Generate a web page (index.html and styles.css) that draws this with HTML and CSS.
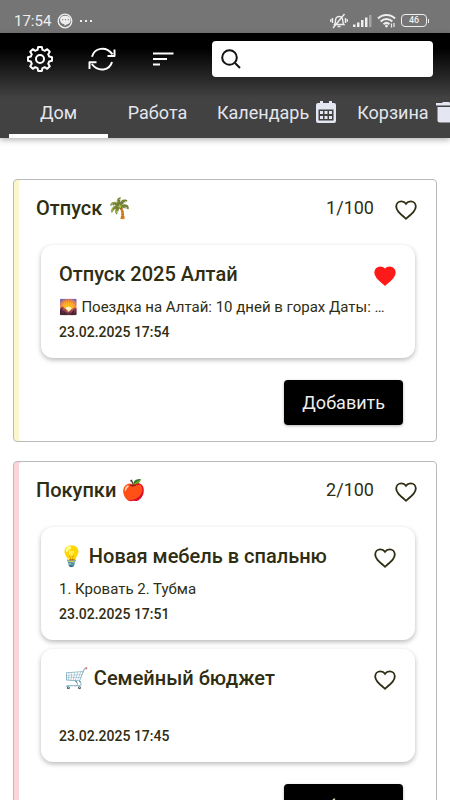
FILE: index.html
```html
<!DOCTYPE html>
<html lang="ru">
<head>
<meta charset="utf-8">
<meta name="viewport" content="width=device-width, initial-scale=1">
<title>Заметки</title>
<link rel="stylesheet" href="styles.css">
</head>
<body>
<svg class="defs" aria-hidden="true">
  <symbol id="heart" viewBox="0 0 24 24"><path d="M12 21.5 C5 15.500 1.300 12.500 1.300 8.300 C1.300 5 3.700 2.500 6.900 2.500 C9 2.500 10.900 3.500 12 5.200 C13.100 3.500 15 2.500 17.100 2.500 C20.300 2.500 22.700 5 22.700 8.300 C22.700 12.500 19 15.500 12 21.500 Z"/></symbol>
</svg>
<div class="status">
  <span class="time">17:54</span>
  <svg class="chat" viewBox="0 0 16 16"><circle cx="8" cy="8" r="6.800" fill="none" stroke="#eee" stroke-width="1.300"/><path d="M3 6.500C3 4 5 2.700 8 2.700s5.600 1.300 5.600 4.300-2 4-4 4.400L7.500 13v-1.700C4.500 11 3 9 3 6.500z" fill="#eee"/><path d="M5.200 6.600h1M8 6.600h1M10.700 6.600h1" stroke="#777" stroke-width="1.200"/></svg>
  <span class="dots"><i></i><i></i><i></i></span>
  <span class="system">
    <svg width="18" height="16" viewBox="0 0 18 16" fill="none" stroke="#eee" stroke-width="1.400"><path d="M4.500 11.500c1.500-2 .5-5 1.700-6.700C7.500 3 10.500 3 12 4.800c1.200 1.700.3 4.700 1.900 6.700zM7.500 13.500h3M2.500 5v5M.7 6.200v2.600M15.500 5v5M17.300 6.200v2.600M3 15 14.500 1"/></svg>
    <svg width="19" height="14" viewBox="0 0 19 14" fill="#eee"><path d="M0 10.500h2.500V13H0zM4 8.500h2.500V13H4zM8 6h2.500v7H8zM12 3.500h2.500V13H12z"/><path d="M16 1h2.500v12H16z" fill="#a5a5a5"/></svg>
    <svg width="19" height="16" viewBox="0 0 19 16" fill="none" stroke="#eee" stroke-width="2"><path d="M1 5.500C5.500.8 13.500.8 18 5.500M3.700 8.500c3.300-3.300 8.300-3.300 11.600 0M6.500 11.200c1.800-1.600 4.200-1.600 6 0"/><circle cx="9.500" cy="13" r="1" fill="#eee" stroke-width="1"/><path d="M14.500 10.500v4M17 10v4" stroke-width="1.200"/></svg>
    <span class="battery">46</span>
  </span>
</div>
<header class="header">
  <div class="toolbar">
    <button class="tool" aria-label="Настройки"><svg viewBox="0 0 28 28"><path d="M11.500 4.900 L12.200 2 H15.800 L16.500 4.900 A9.500 9.500 0 0 1 18.700 5.800 L21.200 4.200 L23.800 6.800 L22.200 9.300 A9.500 9.500 0 0 1 23.100 11.500 L26 12.200 V15.800 L23.100 16.500 A9.500 9.500 0 0 1 22.200 18.700 L23.800 21.200 L21.200 23.800 L18.700 22.200 A9.500 9.500 0 0 1 16.500 23.100 L15.800 26 H12.200 L11.500 23.100 A9.500 9.500 0 0 1 9.300 22.200 L6.800 23.800 L4.200 21.200 L5.800 18.700 A9.500 9.500 0 0 1 4.900 16.500 L2 15.800 V12.200 L4.900 11.500 A9.500 9.500 0 0 1 5.800 9.300 L4.200 6.800 L6.800 4.200 L9.300 5.800 A9.500 9.500 0 0 1 11.500 4.900 Z"/><circle cx="14" cy="14" r="4"/></svg></button>
    <button class="tool" aria-label="Обновить"><svg viewBox="0 0 28 28"><path d="M4 11.800C6.300 2.800 17.800.500 24.500 9.300M26.500 4.500V11H19.500M24 17C21.700 25.400 10.500 27.700 3.800 19M1.500 24V17.200H8.500"/></svg></button>
    <button class="tool" aria-label="Сортировка"><svg viewBox="0 0 28 28"><path d="M3 8.500H23.500M3 14H17M3 19.500H10"/></svg></button>
    <label class="search"><svg viewBox="0 0 22 22"><circle cx="9.500" cy="9.500" r="7.300"/><path d="m15 15 5 5"/></svg><input type="search" aria-label="Поиск"></label>
  </div>
  <nav class="tabs">
    <a class="tab active" href="#home">Дом</a>
    <a class="tab" href="#work">Работа</a>
    <a class="tab" href="#calendar">Календарь <svg viewBox="0 0 22 24"><path d="M3 3H5V1H8V3H14V1H17V3H19Q21 3 21 5V21Q21 23 19 23H3Q1 23 1 21V5Q1 3 3 3Z"/><path d="M3.500 9.500H18.500V20.500H3.500Z" fill="#424242"/><path d="M5 11h3v3H5zM9.500 11h3v3h-3zM14 11h3v3h-3zM5 16h3v3H5zM9.500 16h3v3h-3zM14 16h3v3h-3z"/></svg></a>
    <a class="tab" href="#trash">Корзина <svg viewBox="0 0 22 24"><path d="M1 3H7L8 2H14L15 3H21V5.500H1ZM2.500 7H19.500V20Q19.500 22.500 17 22.500H5Q2.500 22.500 2.500 20Z"/></svg></a>
  </nav>
</header>
<main class="boards">
  <section class="board yellow">
    <div class="board-head"><h2>Отпуск 🌴</h2><span class="count">1/100</span><button class="like" aria-label="В избранное"><svg><use href="#heart"/></svg></button></div>
    <div class="notes">
      <article class="note">
        <div class="note-head"><h3>Отпуск 2025 Алтай</h3><button class="like liked" aria-label="Убрать из избранного"><svg><use href="#heart"/></svg></button></div>
        <p>🌄 Поездка на Алтай: 10 дней в горах Даты: …</p>
        <time>23.02.2025 17:54</time>
      </article>
    </div>
    <button class="add">Добавить</button>
  </section>
  <section class="board pink">
    <div class="board-head"><h2>Покупки 🍎</h2><span class="count">2/100</span><button class="like" aria-label="В избранное"><svg><use href="#heart"/></svg></button></div>
    <div class="notes">
      <article class="note">
        <div class="note-head"><h3>💡 Новая мебель в спальню</h3><button class="like" aria-label="В избранное"><svg><use href="#heart"/></svg></button></div>
        <p>1. Кровать 2. Тубма</p>
        <time>23.02.2025 17:51</time>
      </article>
      <article class="note">
        <div class="note-head"><h3>&nbsp;🛒 Семейный бюджет</h3><button class="like" aria-label="В избранное"><svg><use href="#heart"/></svg></button></div>
        <p></p>
        <time>23.02.2025 17:45</time>
      </article>
    </div>
    <button class="add">Добавить</button>
  </section>
</main>
</body>
</html>
```
FILE: styles.css
```css
* { box-sizing: border-box; }
html { overflow: hidden auto; scrollbar-width: none; }
body { margin: 0; background: #fff; color: #2f2d12; font-family: Roboto, "Noto Color Emoji", sans-serif; }
button { padding: 0; border: 0; background: none; font: inherit; color: inherit; }
h2, h3, p { margin: 0; }
svg { display: block; flex: none; }
.defs { position: absolute; width: 0; height: 0; }

.status { display: flex; align-items: center; height: 33px; padding: 8px 23px 0 14px; background: #757575; color: #eee; }
.time { font-size: 15px; }
.chat { width: 16px; height: 16px; margin-left: 6px; }
.dots { display: flex; gap: 3px; margin-left: 7px; }
.dots i { width: 2px; height: 2px; background: #eee; }
.system { display: flex; align-items: center; gap: 5px; margin-left: auto; }
.battery { position: relative; width: 26px; height: 13px; border: 1px solid #eee; border-radius: 4px; font-size: 9px; font-weight: 500; line-height: 11px; text-align: center; }
.battery::after { content: ""; position: absolute; right: -3px; top: 4px; width: 1px; height: 4px; background: #eee; }

.header { background: linear-gradient(#000 0, #000 15px, #424242 65px); box-shadow: 0 2px 6px rgb(0 0 0 / 30%); }
.toolbar { display: flex; align-items: center; height: 53px; padding: 0 17px 2px 26px; }
.tool { flex: none; width: 28px; height: 28px; margin-right: 34px; }
.tool svg { width: 28px; height: 28px; fill: none; stroke: #fff; stroke-width: 2; stroke-linejoin: round; }
.search { display: flex; flex: 1; align-items: center; min-width: 0; height: 36px; padding: 0 8px; border-radius: 4px; background: #fff; }
.search svg { width: 22px; height: 22px; fill: none; stroke: #111; stroke-width: 2; }
.search input { flex: 1; width: 0; min-width: 0; border: 0; outline: 0; background: none; font: 16px Roboto, sans-serif; }

.tabs { display: flex; height: 52px; padding-left: 9px; overflow: hidden; }
.tab { display: flex; flex: none; align-items: center; justify-content: center; gap: 6px; min-width: 99px; padding: 4px 10px 0; border-bottom: 4px solid transparent; color: #e4e6ee; font-size: 18px; text-decoration: none; }
.tab svg { width: 22px; height: 24px; fill: #e4e6f2; }
.active { border-color: #fff; }

.boards { display: grid; grid-template-columns: minmax(0, 1fr); gap: 19px; padding: 41px 13px 19px; }
.board { display: flex; flex-direction: column; padding: 0 21px 16px 17px; border: 1px solid #bbb; border-radius: 4px; }
.yellow { box-shadow: inset 5px 0 #fbf6cc; }
.pink { box-shadow: inset 5px 0 #fcd5da; }
.board-head { display: flex; align-items: center; height: 65px; padding: 0 0 10px 5px; }
.board h2, .board h3 { flex: 1; font-size: 20px; font-weight: 500; line-height: 24px; white-space: nowrap; }
.count { font-size: 18px; margin-right: 20px; }
.like { flex: none; width: 24px; height: 24px; margin-top: 4px; }
.like svg { width: 24px; height: 24px; padding: 1px; fill: none; stroke: #2f2d12; stroke-width: 2; }
.board-head .like { margin-right: -3px; }
.liked svg { fill: #ff1a1a; stroke: #ff1a1a; }
.notes { display: grid; grid-template-columns: minmax(0, 1fr); gap: 9px; padding-left: 10px; }
.note { height: 113px; padding: 15px 18px; border-radius: 12px; background: #fff; box-shadow: 0 2px 5px rgb(0 0 0 / 28%); }
.note-head { display: flex; height: 28px; }
.note h3 { line-height: 28px; }
.note p { height: 24px; margin-top: 7px; font-size: 15px; line-height: 24px; white-space: nowrap; overflow: hidden; text-overflow: ellipsis; }
.note time { display: block; font-size: 14px; font-weight: 500; line-height: 26px; }
.add { align-self: flex-end; height: 45px; margin: 22px 12px 0 0; padding: 0 18px; border-radius: 4px; background: #000; color: #eee; font-size: 18px; box-shadow: 0 1px 3px rgb(0 0 0 / 30%); }
```
